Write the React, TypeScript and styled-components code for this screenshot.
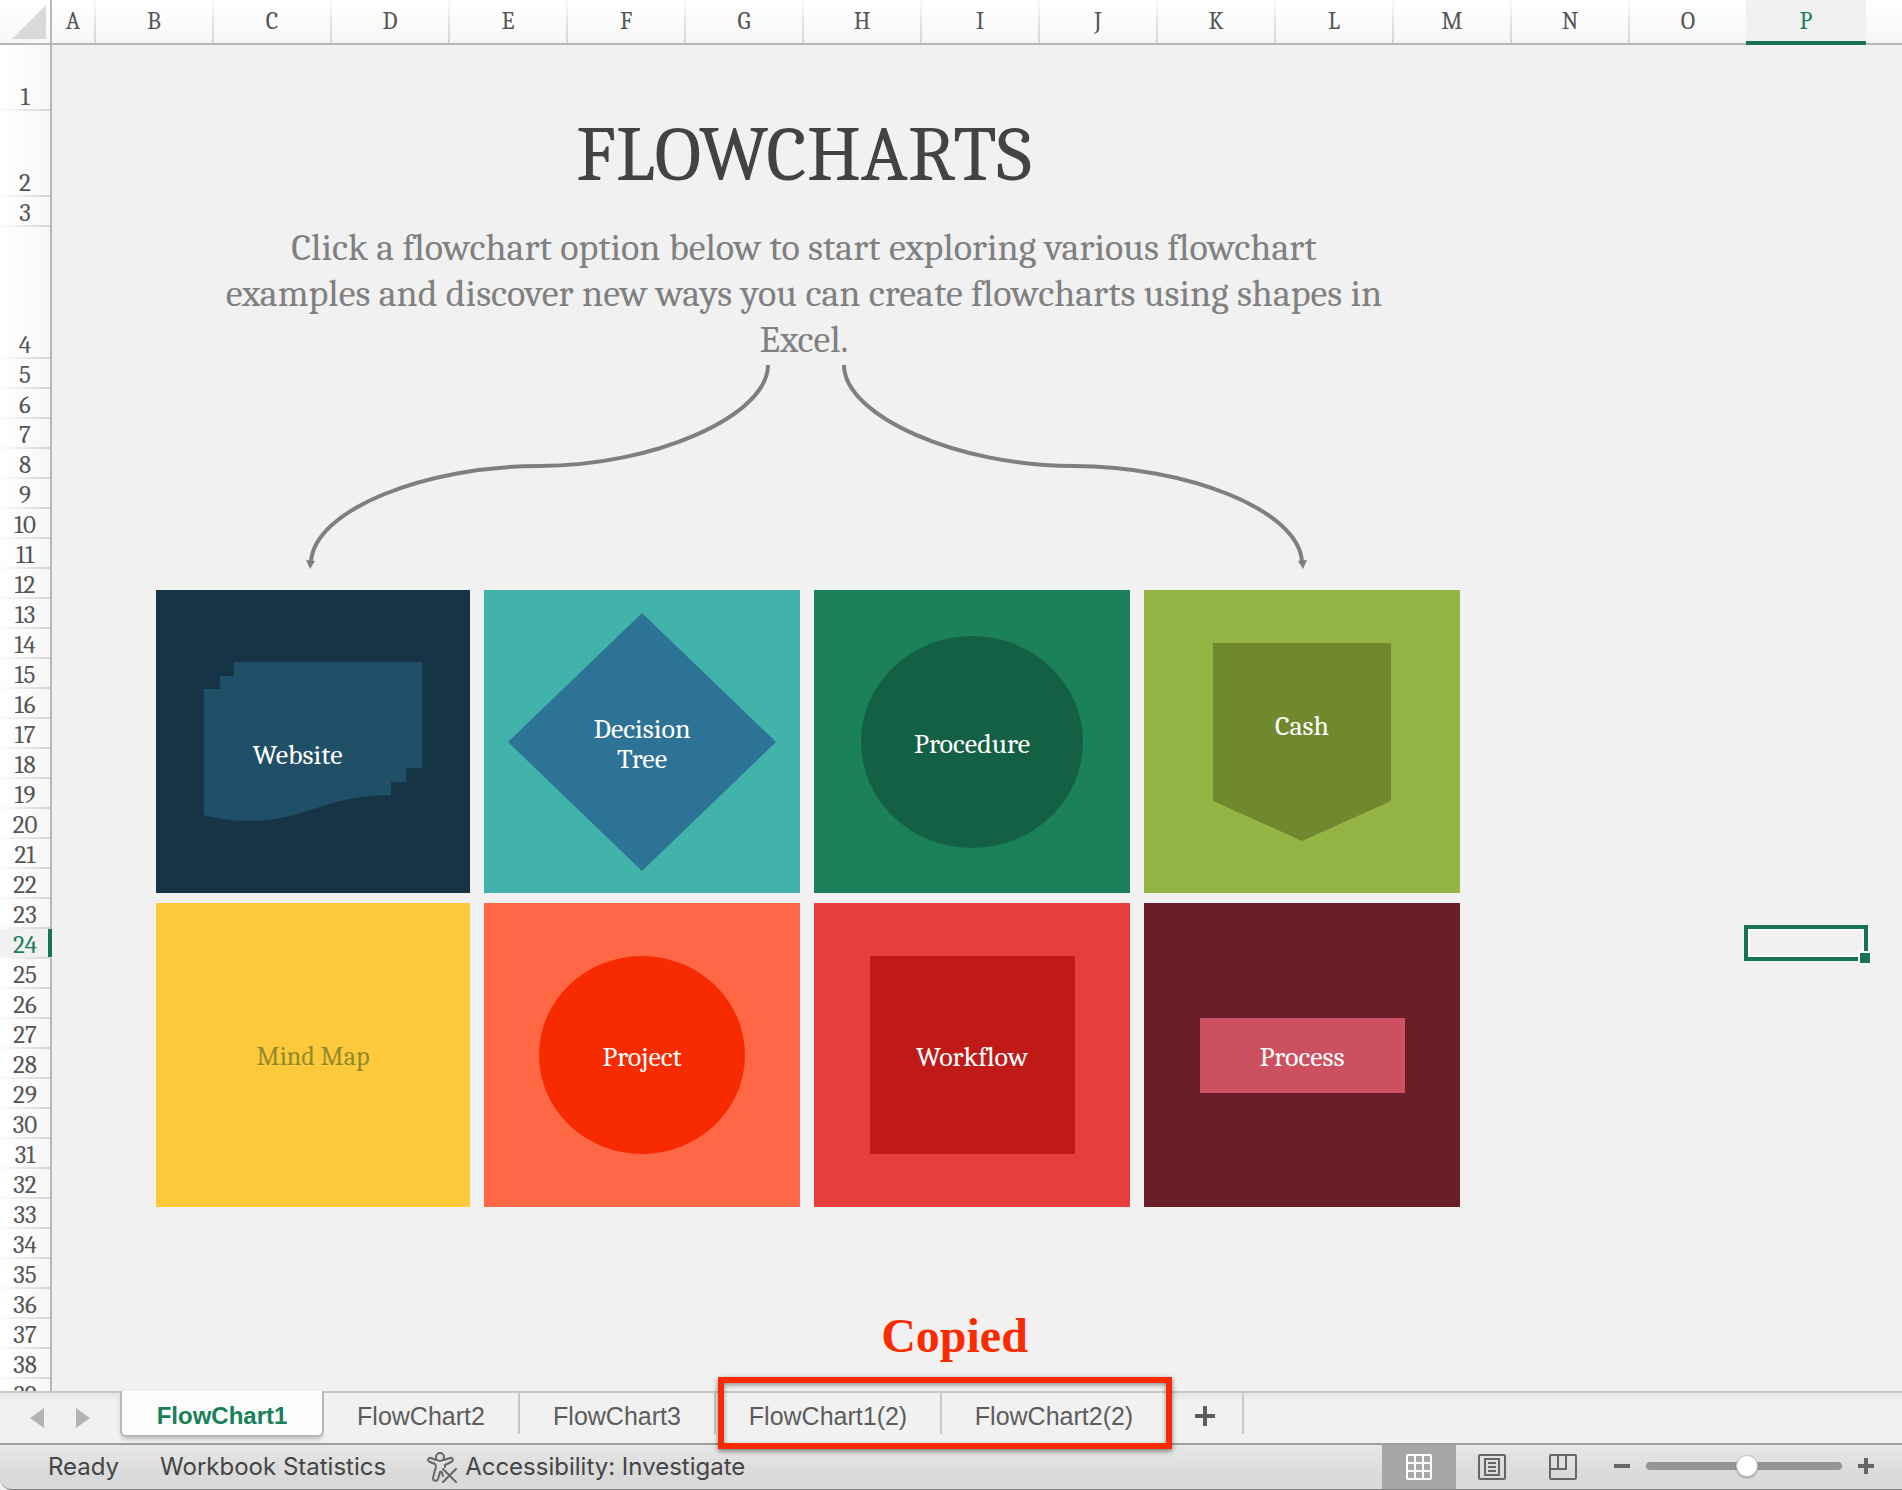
import React, { useState } from "react";
import styled, { createGlobalStyle, css } from "styled-components";

const serif = `Cambria, Caladea, "Noto Serif", "Liberation Serif", serif`;
const sans = `"Liberation Sans", Arial, sans-serif`;
const ui = `Inter, "Liberation Sans", sans-serif`;

const green = "#1a7f59";
const darkGreen = "#167450";
const red = "#fa2b00";
const sheetBg = "#f1f1f1";

const GlobalStyle = createGlobalStyle`
  *, *::before, *::after { box-sizing: border-box; }
  body { margin: 0; background: ${sheetBg}; }
  button { border: 0; padding: 0; background: none; font: inherit; color: inherit; cursor: pointer; }
`;

const Workbook = styled.div`
  display: flex;
  flex-direction: column;
  height: 100vh;
  overflow: hidden;
  background: ${sheetBg};
`;

/* ---------- column and row headings ---------- */

const ColumnBar = styled.div`
  display: flex;
  flex: none;
  height: 45px;
  border-bottom: 2px solid #b8b8b8;
  background: linear-gradient(#ffffff, #f7f7f7);
  font: 24px/42px ${serif};
  color: #555;
`;

const Corner = styled.button`
  display: flex;
  flex: none;
  width: 52px;
  padding: 5px 4px 4px 12px;
  border-right: 2px solid #b8b8b8;
`;

const ColumnHead = styled.div<{ $narrow?: boolean; $active?: boolean }>`
  flex: none;
  width: ${(p) => (p.$narrow ? 44 : 118)}px;
  height: 43px;
  text-align: center;
  border-right: 2px solid;
  border-image: linear-gradient(#fafafa, #d2d2d2) 1;
  ${(p) =>
    p.$active &&
    css`
      width: 120px;
      height: 45px;
      margin-left: -2px;
      border: 0;
      border-bottom: 4px solid ${darkGreen};
      background: ${sheetBg};
      color: ${green};
    `}
`;

const Body = styled.div`
  display: flex;
  flex: 1;
  min-height: 0;
  overflow: hidden;
`;

const RowBar = styled.div`
  flex: none;
  width: 52px;
  border-right: 2px solid #b8b8b8;
  background: linear-gradient(90deg, #ffffff, #f7f7f7);
  font: 25px/24px ${serif};
  color: #555;
`;

const RowHead = styled.div<{ $height: number; $active?: boolean }>`
  display: flex;
  align-items: flex-end;
  justify-content: center;
  height: ${(p) => p.$height}px;
  border-bottom: 2px solid;
  border-image: linear-gradient(90deg, #fdfdfd, #d2d2d2) 1;
  ${(p) =>
    p.$active &&
    css`
      margin-right: -2px;
      padding-right: 2px;
      background: ${sheetBg};
      color: ${green};
      box-shadow: inset -4px 0 ${darkGreen};
    `}
`;

/* ---------- sheet ---------- */

const Sheet = styled.main`
  position: relative;
  flex: 1;
  min-width: 0;
`;

const Intro = styled.header`
  display: flex;
  flex-direction: column;
  align-items: center;
  width: 1416px;
  height: 320px;
  margin-left: 44px;
  padding-top: 67px;
  text-align: center;
  font-family: ${serif};
`;

const Title = styled.h1`
  margin: 0;
  font-size: 78px;
  line-height: 86px;
  font-weight: 400;
  color: #434343;
`;

const Lead = styled.p`
  max-width: 1174px;
  margin: 27px 0 0;
  font-size: 38px;
  line-height: 46px;
  color: #808080;
`;

const Connectors = styled.svg`
  display: block;
  margin-left: 104px;
`;

const Cards = styled.nav`
  display: grid;
  grid-template-columns: 314px repeat(3, 316px);
  grid-template-rows: 303px 304px;
  gap: 10px 14px;
  margin: 17px 0 0 104px;
`;

const Card = styled.a<{ $bg: string }>`
  display: grid;
  place-items: center;
  background: ${(p) => p.$bg};
  text-decoration: none;

  & > * {
    grid-area: 1 / 1;
  }
`;

const Label = styled.span<{ $ink?: string; $right?: number; $bottom?: number; $top?: number }>`
  padding: ${(p) => `${p.$top ?? 4}px ${p.$right ?? 0}px ${p.$bottom ?? 0}px 0`};
  color: ${(p) => p.$ink ?? "#fff"};
  font: ${(p) => (p.$ink ? 26 : 28)}px/30px ${serif};
  text-align: center;
  white-space: pre-line;
`;

const ActiveCell = styled.div`
  position: absolute;
  left: 1692px;
  top: 880px;
  width: 124px;
  height: 36px;
  border: 4px solid ${darkGreen};
  box-shadow: inset 0 0 0 2px #fff;

  &::after {
    content: "";
    position: absolute;
    right: -6px;
    bottom: -6px;
    width: 12px;
    height: 12px;
    border: solid #fff;
    border-width: 2px 0 0 2px;
    background: ${darkGreen};
  }
`;

/* ---------- sheet tabs ---------- */

const TabBar = styled.div`
  position: relative;
  display: flex;
  flex: none;
  height: 54px;
  border-top: 2px solid #c8c8c8;
  border-bottom: 2px solid #9e9e9e;
  background: linear-gradient(#e6e6e6, ${sheetBg} 10px);
  font: 25px/46px ${sans};
  color: #5c5c5c;
`;

const Pager = styled.div`
  display: flex;
  align-items: center;
  gap: 28px;
  width: 120px;
  padding-left: 28px;
`;

const PagerButton = styled.button`
  display: flex;
  width: 18px;
`;

const Tab = styled.button<{ $active?: boolean; $wide?: boolean }>`
  width: ${(p) => (p.$wide ? 226 : 196)}px;
  height: 41px;
  border-right: 2px solid #c8c8c8;
  background: ${sheetBg};
  line-height: 46px;
  ${(p) =>
    p.$active &&
    css`
      width: 204px;
      height: 46px;
      margin-top: -2px;
      padding-top: 2px;
      border: solid #b8b8b8;
      border-width: 0 2px 2px;
      border-radius: 0 0 6px 6px;
      background: #fcfcfc;
      box-shadow: 0 3px 4px -1px #bbb;
      color: ${green};
      font-size: 24px;
      font-weight: 700;
    `}
`;

const CopiedTabs = styled.div`
  position: relative;
  display: flex;
`;

const CopiedFrame = styled.div`
  position: absolute;
  inset: -16px -4px -6px 2px;
  border: 6px solid ${red};
  box-shadow: 0 2px 5px rgba(0, 0, 0, 0.5), inset 0 2px 5px rgba(0, 0, 0, 0.4);
  pointer-events: none;
`;

const CopiedNote = styled.div`
  position: absolute;
  left: 0;
  right: -25px;
  top: -85px;
  text-align: center;
  font: 700 48px/56px "Liberation Serif", "Times New Roman", serif;
  color: ${red};
`;

const AddTab = styled.button`
  display: flex;
  align-items: center;
  justify-content: center;
  width: 76px;
  height: 41px;
  padding-top: 4px;
  border-right: 2px solid #c8c8c8;
`;

/* ---------- status bar ---------- */

const StatusBar = styled.footer`
  display: flex;
  flex: none;
  align-items: stretch;
  height: 45px;
  border-bottom: 1px solid #858585;
  border-bottom-left-radius: 12px;
  background: linear-gradient(#e8e8e8, #dadada 28px);
  font: 24px/44px ${ui};
  color: #444;
`;

const StatusItems = styled.div`
  display: flex;
  flex: 1;
  gap: 41px;
  padding-left: 48px;
`;

const StatusButton = styled.button`
  display: flex;
  align-items: center;
  gap: 8px;
  white-space: nowrap;
`;

const ViewButton = styled.button<{ $active?: boolean }>`
  display: flex;
  align-items: center;
  justify-content: center;
  width: ${(p) => (p.$active ? 74 : 71)}px;
  background: ${(p) => (p.$active ? "#a6a6a6" : "transparent")};
`;

const Zoom = styled.div`
  display: flex;
  align-items: center;
  gap: 8px;
  padding: 0 20px 2px 8px;
`;

const ZoomButton = styled.button`
  display: flex;
  justify-content: center;
  width: 32px;
`;

const ZoomSlider = styled.input`
  appearance: none;
  width: 196px;
  height: 22px;
  margin: 0;
  background: none;

  &::-webkit-slider-runnable-track {
    height: 8px;
    border-radius: 4px;
    background: #949694;
  }

  &::-webkit-slider-thumb {
    appearance: none;
    width: 22px;
    height: 22px;
    margin-top: -7px;
    border: 1px solid #c4c4c4;
    border-radius: 50%;
    background: #fff;
    box-shadow: 0 1px 2px rgba(0, 0, 0, 0.3);
  }
`;

/* ---------- data ---------- */

const columns = "ABCDEFGHIJKLMNOP".split("");
const tallRows: Record<number, number> = { 1: 66, 2: 86, 4: 132 };
const rows = Array.from({ length: 39 }, (_, i) => i + 1);

const cards = [
  {
    name: "Website",
    bg: "#173447",
    right: 31,
    top: 46,
    bottom: 20,
    art: (
      <svg width="218" height="160" viewBox="0 0 218 160" fill="#205067">
        <path d="M30 0H218V106H202V120H187V133C118 134 104 158 46 159 28 159 12 156 0 153V27H16V14H30Z" />
      </svg>
    ),
  },
  {
    name: "Decision\nTree",
    bg: "#41b3ab",
    art: (
      <svg width="268" height="258" viewBox="0 0 268 258" fill="#2d7396">
        <path d="M134 0 268 129 134 258 0 129Z" />
      </svg>
    ),
  },
  {
    name: "Procedure",
    bg: "#1b815a",
    art: (
      <svg width="222" height="212" viewBox="0 0 222 212" fill="#146044">
        <ellipse cx="111" cy="106" rx="111" ry="106" />
      </svg>
    ),
  },
  {
    name: "Cash",
    bg: "#94b543",
    bottom: 36,
    art: (
      <svg width="178" height="198" viewBox="0 0 178 198" fill="#70892f">
        <path d="M0 0H178V158L89 198 0 158Z" />
      </svg>
    ),
  },
  { name: "Mind Map", bg: "#fec93b", ink: "#8f8b2d", art: null },
  {
    name: "Project",
    bg: "#ff6745",
    art: (
      <svg width="206" height="198" viewBox="0 0 206 198" fill="#f72a00">
        <ellipse cx="103" cy="99" rx="103" ry="99" />
      </svg>
    ),
  },
  {
    name: "Workflow",
    bg: "#e63e3d",
    art: (
      <svg width="205" height="198" viewBox="0 0 205 198" fill="#bf1a18">
        <rect width="205" height="198" />
      </svg>
    ),
  },
  {
    name: "Process",
    bg: "#691e28",
    art: (
      <svg width="205" height="75" viewBox="0 0 205 75" fill="#cd5060">
        <rect width="205" height="75" />
      </svg>
    ),
  },
];

const AccessibilityIcon = () => (
  <svg width="30" height="31" viewBox="0 0 30 31" fill="none" stroke="#666" strokeWidth="2" strokeLinecap="round" strokeLinejoin="round">
    <circle cx="13" cy="5" r="4" />
    <path d="M9 8 4 6C1 5 0 9 3 10L8 12C9 13 9 16 8 18L6 26C6 29 10 30 11 27L13 20C14 19 15 20 15 21L16 24" />
    <path d="M17 8 23 6C26 5 27 9 24 10L18 13V15" />
    <path d="M16 17 29 30M29 17 16 30" />
  </svg>
);

export default function App() {
  const [zoom, setZoom] = useState(52);

  return (
    <>
      <GlobalStyle />
      <Workbook>
        <ColumnBar>
          <Corner aria-label="Select all">
            <svg width="34" height="34" viewBox="0 0 34 34">
              <path d="M34 0V34H0Z" fill="#d9d9d9" />
            </svg>
          </Corner>
          {columns.map((c) => (
            <ColumnHead key={c} $narrow={c === "A"} $active={c === "P"}>
              {c}
            </ColumnHead>
          ))}
        </ColumnBar>

        <Body>
          <RowBar>
            {rows.map((r) => (
              <RowHead key={r} $height={tallRows[r] ?? 30} $active={r === 24}>
                {r}
              </RowHead>
            ))}
          </RowBar>

          <Sheet>
            <Intro>
              <Title>FLOWCHARTS</Title>
              <Lead>
                Click a flowchart option below to start exploring various flowchart examples and
                discover new ways you can create flowcharts using shapes in Excel.
              </Lead>
            </Intro>
            <Connectors width="1304" height="208" viewBox="156 365 1304 208" fill="none" stroke="#7f7f7f" strokeWidth="4">
              <path d="M768 365C768 416 654 466 539 466C425 466 314 510 311 562" />
              <path d="M844 365C844 416 958 466 1073 466C1187 466 1299 510 1302 562" />
              <path d="M306 560 315 561 310 569Z" fill="#7f7f7f" stroke="none" />
              <path d="M1298 561 1307 560 1303 569Z" fill="#7f7f7f" stroke="none" />
            </Connectors>
            <Cards aria-label="Flowchart examples">
              {cards.map((c) => (
                <Card key={c.name} href="#" $bg={c.bg}>
                  {c.art}
                  <Label $ink={c.ink} $right={c.right} $bottom={c.bottom} $top={c.top}>
                    {c.name}
                  </Label>
                </Card>
              ))}
            </Cards>
            <ActiveCell />
          </Sheet>
        </Body>

        <TabBar>
          <Pager>
            <PagerButton aria-label="Previous sheet">
              <svg width="18" height="20" viewBox="0 0 18 20" fill="#b4b4b4">
                <path d="M16 0V20L2 10Z" />
              </svg>
            </PagerButton>
            <PagerButton aria-label="Next sheet">
              <svg width="18" height="20" viewBox="0 0 18 20" fill="#b4b4b4">
                <path d="M2 0V20L16 10Z" />
              </svg>
            </PagerButton>
          </Pager>
          <Tab $active>FlowChart1</Tab>
          <Tab>FlowChart2</Tab>
          <Tab>FlowChart3</Tab>
          <CopiedTabs>
            <Tab $wide>FlowChart1(2)</Tab>
            <Tab $wide>FlowChart2(2)</Tab>
            <CopiedFrame />
            <CopiedNote>Copied</CopiedNote>
          </CopiedTabs>
          <AddTab aria-label="Add sheet">
            <svg width="20" height="20" viewBox="0 0 20 20" fill="#5c5c5c">
              <path d="M8 0H12V8H20V12H12V20H8V12H0V8H8Z" />
            </svg>
          </AddTab>
        </TabBar>

        <StatusBar>
          <StatusItems>
            <StatusButton>Ready</StatusButton>
            <StatusButton>Workbook Statistics</StatusButton>
            <StatusButton>
              <AccessibilityIcon />
              Accessibility: Investigate
            </StatusButton>
          </StatusItems>
          <ViewButton $active aria-label="Normal view">
            <svg width="26" height="26" viewBox="0 0 26 26" fill="none" stroke="#fff" strokeWidth="2">
              <rect x="1" y="1" width="24" height="24" rx="1" />
              <path d="M9 1V25M17 1V25M1 9H25M1 17H25" />
            </svg>
          </ViewButton>
          <ViewButton aria-label="Page layout view">
            <svg width="28" height="26" viewBox="0 0 28 26" fill="none" stroke="#666" strokeWidth="2">
              <rect x="1" y="1" width="26" height="24" rx="1" />
              <rect x="7" y="5" width="14" height="16" />
              <path d="M10 9H18M10 13H18M10 17H18" />
            </svg>
          </ViewButton>
          <ViewButton aria-label="Page break view">
            <svg width="28" height="26" viewBox="0 0 28 26" fill="none" stroke="#666" strokeWidth="2">
              <rect x="1" y="1" width="26" height="24" rx="1" />
              <path d="M1 15H17V1M9 1V15" />
            </svg>
          </ViewButton>
          <Zoom>
            <ZoomButton aria-label="Zoom out">
              <svg width="16" height="16" viewBox="0 0 16 16" fill="#666">
                <rect y="6" width="16" height="4" />
              </svg>
            </ZoomButton>
            <ZoomSlider
              type="range"
              aria-label="Zoom"
              min={0}
              max={100}
              value={zoom}
              onChange={(e) => setZoom(Number(e.target.value))}
            />
            <ZoomButton aria-label="Zoom in">
              <svg width="16" height="16" viewBox="0 0 16 16" fill="#666">
                <path d="M6 0H10V6H16V10H10V16H6V10H0V6H6Z" />
              </svg>
            </ZoomButton>
          </Zoom>
        </StatusBar>
      </Workbook>
    </>
  );
}
